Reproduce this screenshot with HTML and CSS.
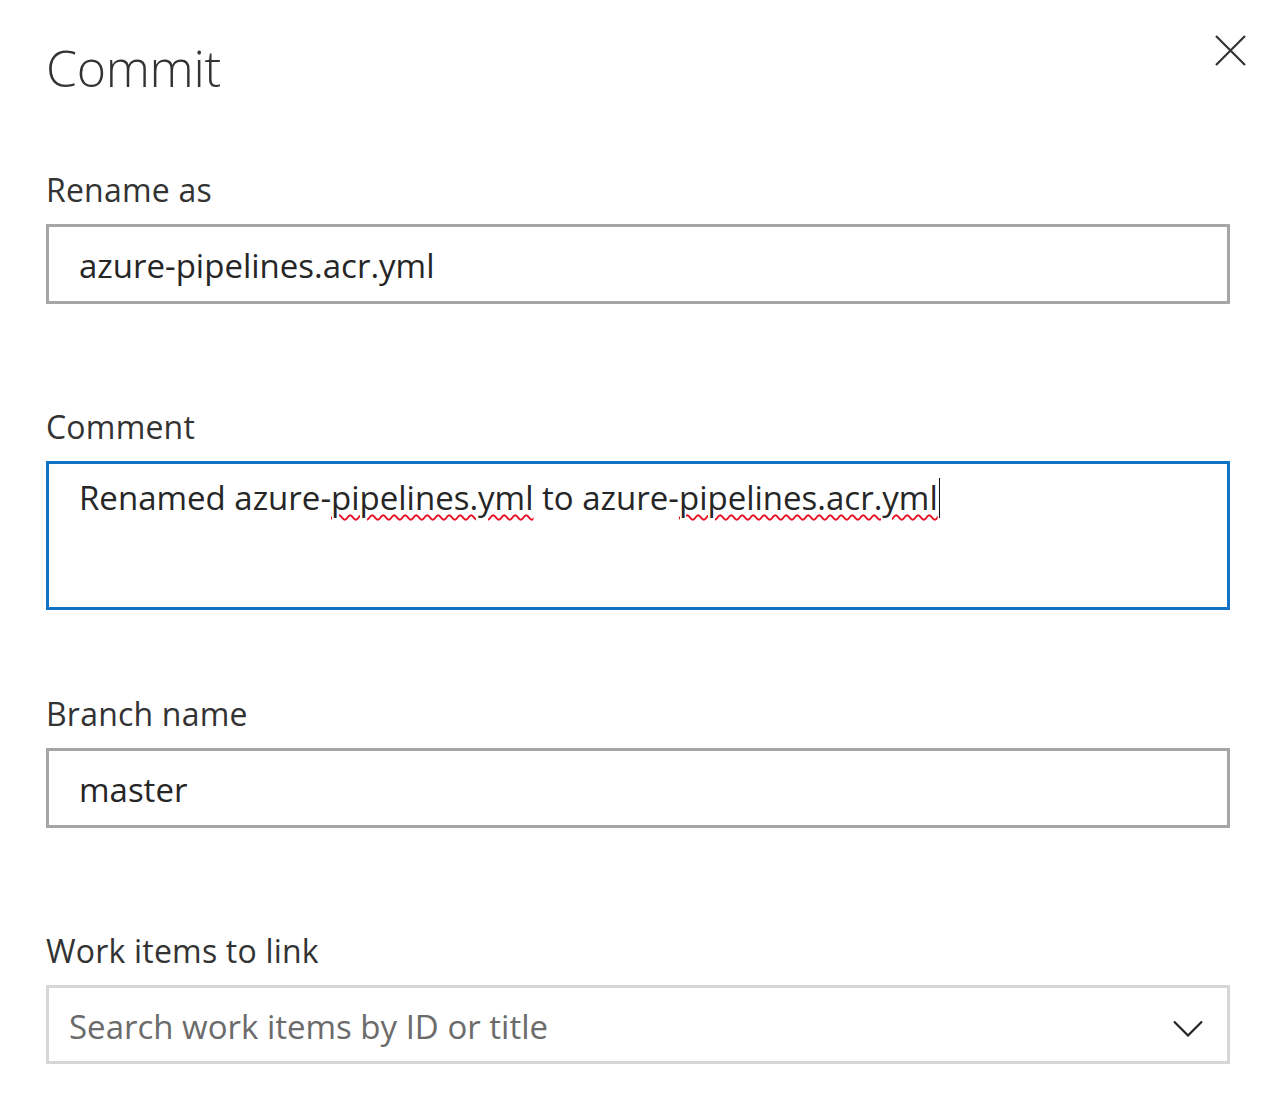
FILE: index.html
```html
<!DOCTYPE html>
<html lang="en">
<head>
<meta charset="utf-8">
<title>Commit</title>
<link rel="stylesheet" href="styles.css">
</head>
<body>
<div class="panel">
  <div class="header">
    <h1 class="title">Commit</h1>
    <button class="close" aria-label="Close">
      <svg width="31" height="31" viewBox="0 0 31 31"><path d="M1 1 L30 30 M30 1 L1 30" stroke="#333" stroke-width="2.2" fill="none"/></svg>
    </button>
  </div>

  <div class="field field-rename">
    <div class="label">Rename as</div>
    <div class="box box-input"><span class="value">azure-pipelines.acr.yml</span></div>
  </div>

  <div class="field field-comment">
    <div class="label">Comment</div>
    <div class="box box-area"><span class="value">Renamed azure-<span class="spell">pipelines.yml</span> to azure-<span class="spell">pipelines.acr.yml</span><span class="caret"></span></span></div>
  </div>

  <div class="field field-branch">
    <div class="label">Branch name</div>
    <div class="box box-input"><span class="value">master</span></div>
  </div>

  <div class="field field-work">
    <div class="label">Work items to link</div>
    <div class="box box-search">
      <span class="placeholder">Search work items by ID or title</span>
      <svg class="chevron" width="30" height="17" viewBox="0 0 30 17"><path d="M1 1.5 L15 15.5 L29 1.5" stroke="#222" stroke-width="2.2" fill="none"/></svg>
    </div>
  </div>
</div>
</body>
</html>
```

FILE: styles.css
```css
html, body {
  margin: 0;
  padding: 0;
  background: #ffffff;
}

body {
  font-family: "Open Sans", "Noto Sans", sans-serif;
  color: #333333;
}

.panel {
  width: 1184px;
  padding: 0 0 0 46px;
}

.header {
  display: flex;
  justify-content: space-between;
  align-items: flex-start;
  padding-top: 38px;
}

.title {
  margin: 0;
  font-weight: 300;
  font-size: 50px;
  line-height: 60px;
  color: #333333;
  letter-spacing: -0.3px;
}

.close {
  margin: -3px -16px 0 0;
  padding: 0;
  border: 0;
  background: transparent;
  width: 31px;
  height: 31px;
  display: block;
}

.close svg {
  display: block;
}

.label {
  font-size: 32px;
  line-height: 36px;
  margin-bottom: 16px;
  color: #333333;
  letter-spacing: 0.2px;
}

.field-rename { margin-top: 74px; }
.field-comment { margin-top: 105px; }
.field-branch { margin-top: 86px; }
.field-work { margin-top: 105px; }

.box {
  box-sizing: border-box;
  border: 3px solid #a6a6a6;
  font-size: 33px;
  color: #262626;
}

.box-input {
  height: 80px;
  padding: 2px 0 0 30px;
  line-height: 73px;
}

.box-area {
  height: 149px;
  border-color: #1272c6;
  padding: 12px 0 0 30px;
  line-height: 44px;
}

.box-search {
  height: 79px;
  border-color: #d6d6d6;
  padding: 0 24px 0 20px;
  display: flex;
  align-items: center;
  justify-content: space-between;
}

.placeholder {
  color: #6b6b6b;
  padding-top: 3px;
}

.chevron {
  display: block;
  margin-top: 8px;
}

.spell {
  text-decoration: underline wavy #e81123;
  text-decoration-thickness: 1.5px;
  text-underline-offset: 4px;
}

.caret {
  display: inline-block;
  width: 0;
  height: 40px;
  border-left: 1.5px solid #111;
  vertical-align: -8px;
  margin-left: 1px;
}
```
